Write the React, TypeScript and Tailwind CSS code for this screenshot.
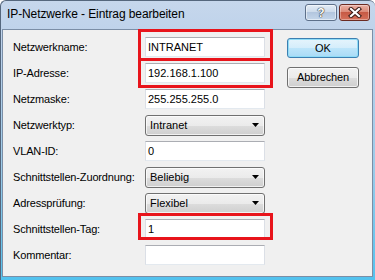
import React from "react";

const font = { fontFamily: '"Liberation Sans", Arial, sans-serif' };

function TextBox({ value }: { value: string }) {
  return (
    <div className="w-[120px] h-[20px] bg-white border border-[#dbdfe6] border-t-[#abadb3] border-b-[#e3e9ef] flex items-center pl-[2px] text-[11px] text-black leading-none">
      {value}
    </div>
  );
}

function Select({ value }: { value: string }) {
  return (
    <div className="w-[120px] h-[21px] rounded-[3px] border border-[#707070] bg-[linear-gradient(to_bottom,#f2f2f2_0%,#ebebeb_50%,#dddddd_51%,#cfcfcf_100%)] flex items-center justify-between pl-[4px] pr-[5px] text-[11px] text-black leading-none shadow-[inset_0_0_0_1px_rgba(255,255,255,0.7)]">
      <span>{value}</span>
      <svg width="7" height="4" viewBox="0 0 7 4">
        <polygon points="0,0 7,0 3.5,4" fill="#000" />
      </svg>
    </div>
  );
}

const rows: { label: string; kind: "text" | "select"; value: string }[] = [
  { label: "Netzwerkname:", kind: "text", value: "INTRANET" },
  { label: "IP-Adresse:", kind: "text", value: "192.168.1.100" },
  { label: "Netzmaske:", kind: "text", value: "255.255.255.0" },
  { label: "Netzwerktyp:", kind: "select", value: "Intranet" },
  { label: "VLAN-ID:", kind: "text", value: "0" },
  { label: "Schnittstellen-Zuordnung:", kind: "select", value: "Beliebig" },
  { label: "Adressprüfung:", kind: "select", value: "Flexibel" },
  { label: "Schnittstellen-Tag:", kind: "text", value: "1" },
  { label: "Kommentar:", kind: "text", value: "" },
];

export default function App() {
  return (
    <div className="relative w-[375px] h-[280px] overflow-hidden bg-white" style={font}>
      <div className="w-[375px] h-[280px] rounded-t-[6px] border-t border-l border-[#55677d] bg-[linear-gradient(to_bottom,#c6d7ec_0%,#bcd1ea_15%,#9ccbe9_60%,#52c2ee_100%)] flex flex-col">
        {/* title bar */}
        <div className="h-[28px] shrink-0 flex items-start justify-between pl-[6px] pr-[5px]">
          <div className="mt-[6px] text-[12px] text-black leading-[14px] tracking-[-0.1px]">
            IP-Netzwerke - Eintrag bearbeiten
          </div>
          <div className="flex gap-[2px] mt-[3px]">
            <div className="w-[32px] h-[17px] rounded-[3px] border border-[#5d708a] bg-[linear-gradient(to_bottom,#e4ecf6_0%,#cddbeb_45%,#b3c6de_50%,#c4d6ea_100%)] flex items-center justify-center shadow-[inset_0_0_0_1px_rgba(255,255,255,0.5)]">
              <span
                className="text-[12px] font-bold text-white leading-none"
                style={{ textShadow: "0 0 1px #333, 0 0 1px #333, 0 0 1px #333" }}
              >
                ?
              </span>
            </div>
            <div className="w-[31px] h-[17px] rounded-[3px] border border-[#6b2b22] bg-[linear-gradient(to_bottom,#eab0a4_0%,#dc8a78_45%,#c75a45_50%,#d5705a_100%)] flex items-center justify-center shadow-[inset_0_0_0_1px_rgba(255,255,255,0.35)]">
              <svg width="14" height="11" viewBox="0 0 14 11">
                <path d="M3 2 L11 9 M11 2 L3 9" stroke="#3a1a16" strokeWidth="4.2" strokeLinecap="square" />
                <path d="M3 2 L11 9 M11 2 L3 9" stroke="#ffffff" strokeWidth="2.2" strokeLinecap="square" />
              </svg>
            </div>
          </div>
        </div>
        {/* client area */}
        <div className="flex-1 ml-[1px] mr-[2px] mb-[3px] border border-[#7b8ea6] bg-[#f0f0f0] flex pt-[7px] pl-[10px] pr-[11px]">
          <div className="flex flex-col gap-[6px] w-[252px]">
            {rows.map((r) => (
              <div key={r.label} className="flex items-center h-[20px]">
                <div className="w-[132px] text-[11px] text-black leading-none tracking-[-0.15px]">{r.label}</div>
                {r.kind === "text" ? <TextBox value={r.value} /> : <Select value={r.value} />}
              </div>
            ))}
          </div>
          <div className="flex flex-col gap-[9px] ml-[22px] pt-[1px]">
            <div className="w-[72px] h-[20px] rounded-[3px] border border-[#3c7fb1] bg-[linear-gradient(to_bottom,#e5f4fc_0%,#d4edfb_50%,#bde5fa_51%,#a9dbf6_100%)] flex items-center justify-center text-[11px] text-black shadow-[inset_0_0_0_1px_#8fdcf7]">
              OK
            </div>
            <div className="w-[72px] h-[21px] rounded-[3px] border border-[#707070] bg-[linear-gradient(to_bottom,#f2f2f2_0%,#ebebeb_50%,#dddddd_51%,#cfcfcf_100%)] flex items-center justify-center text-[11px] text-black tracking-[-0.15px] shadow-[inset_0_0_0_1px_rgba(255,255,255,0.7)]">
              Abbrechen
            </div>
          </div>
        </div>
      </div>
      {/* red annotation boxes */}
      <div className="absolute left-[138px] top-[29px] w-[135px] h-[32px] border-[3px] border-[#e8141b]" />
      <div className="absolute left-[138px] top-[58px] w-[135px] h-[30px] border-[3px] border-[#e8141b]" />
      <div className="absolute left-[138px] top-[213px] w-[135px] h-[27px] border-[3px] border-[#e8141b]" />
    </div>
  );
}
